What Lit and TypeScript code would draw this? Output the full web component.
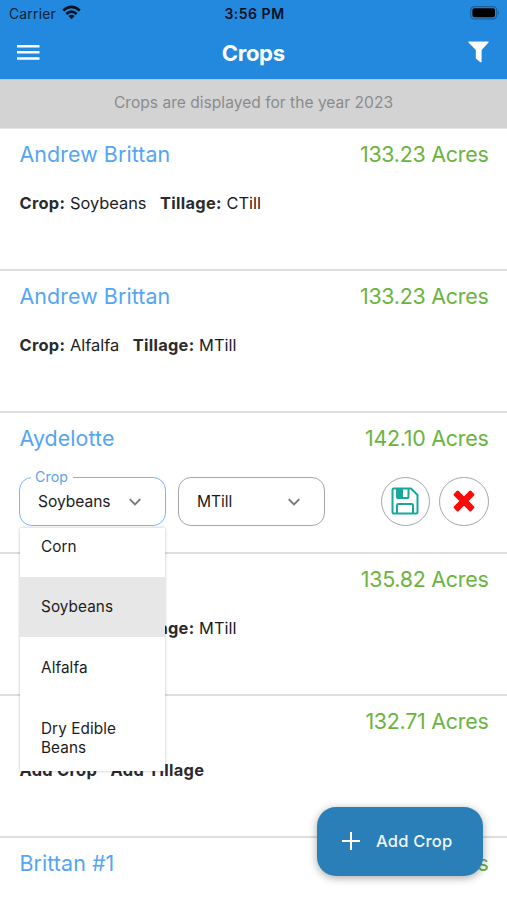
import { LitElement, html, css, nothing } from "lit";
import { customElement, property } from "lit/decorators.js";

interface Field {
  name: string;
  acres: string;
  crop?: string;
  tillage?: string;
  mode?: "editing" | "collapsed";
}

const FIELDS: Field[] = [
  { name: "Andrew Brittan", acres: "133.23", crop: "Soybeans", tillage: "CTill" },
  { name: "Andrew Brittan", acres: "133.23", crop: "Alfalfa", tillage: "MTill" },
  { name: "Aydelotte", acres: "142.10", crop: "Soybeans", tillage: "MTill", mode: "editing" },
  { name: "", acres: "135.82", crop: "Alfalfa", tillage: "MTill" },
  { name: "", acres: "132.71" },
  { name: "Brittan #1", acres: "132.71", mode: "collapsed" },
];

const CROPS = ["Corn", "Soybeans", "Alfalfa", "Dry Edible Beans"];

const chevron = html`<svg width="14" height="10" viewBox="0 0 14 10">
  <path d="M1.700 2.200 7 7.500 12.300 2.200" fill="none" stroke="#77777a" stroke-width="1.900" />
</svg>`;

@customElement("select-box")
class SelectBox extends LitElement {
  @property() label = "";
  @property() value = "";
  @property({ attribute: false }) options: string[] = [];

  static styles = css`
    :host { display: block; position: relative; width: 147px; height: 49.5px; }
    .box {
      box-sizing: border-box; height: 100%; border: 1.4px solid #a6a6a8; border-radius: 13px;
      display: flex; align-items: center; justify-content: space-between;
      padding: 1px 23px 0 18.5px; background: #fff;
      font-size: 15.6px; letter-spacing: -0.05px; color: #1c1c1e;
    }
    .box.open { border-color: #7ab6f0; }
    .label {
      position: absolute; left: 12px; top: -9px; padding: 0 5px 0 4.5px; background: #fff;
      color: #5aa5ee; font-size: 14.2px; line-height: 18px; letter-spacing: 0.1px;
    }
    .menu {
      position: absolute; z-index: 2; left: 1px; top: 51.5px; width: 145.5px; height: 243px;
      overflow: hidden; background: #fff; box-shadow: 0 0 3px rgba(0, 0, 0, 0.25);
      display: flex; flex-direction: column;
    }
    .item {
      box-sizing: border-box; flex: none; min-height: 60.5px; padding: 0 35px 0 21.5px;
      display: flex; align-items: center; white-space: normal;
      font-size: 15.3px; line-height: 19px; letter-spacing: 0.08px; color: #1c1c1e;
    }
    .item:first-child { margin-top: -12px; }
    .item:last-child { height: 81px; }
    .item.on { background: #e7e7e7; }
  `;

  render() {
    const open = this.options.length > 0;
    return html`
      <div class="box ${open ? "open" : ""}"><span>${this.value}</span>${chevron}</div>
      ${this.label ? html`<span class="label">${this.label}</span>` : nothing}
      ${open
        ? html`<div class="menu">
            ${this.options.map((o) => html`<div class="item ${o === this.value ? "on" : ""}">${o}</div>`)}
          </div>`
        : nothing}
    `;
  }
}

@customElement("field-row")
class FieldRow extends LitElement {
  @property({ attribute: false }) field!: Field;

  static styles = css`
    :host {
      display: block; box-sizing: border-box; height: 141.7px; flex: none;
      border-bottom: 2px solid #dedede; padding: 11.2px 18.5px 0 19.5px; white-space: nowrap;
    }
    .head {
      display: flex; justify-content: space-between; height: 28px; line-height: 28px;
      font-size: 21.4px;
    }
    .name { color: #54a5f5; letter-spacing: 0.08px; }
    .acres { color: #6ab43e; letter-spacing: -0.25px; }
    .details {
      display: flex; gap: 13.5px; margin-top: 24px; line-height: 22px;
      font-size: 16.4px; color: #1c1c1e;
    }
    .details b { font-weight: 650; color: #2b2b2d; letter-spacing: 0.3px; }
    .edit { display: flex; align-items: center; margin: 24.8px 0 0 -1px; }
    .edit select-box + select-box { margin-left: 12px; }
    .round {
      box-sizing: border-box; width: 49.5px; height: 49.5px; border: 1.4px solid #a6a6a8;
      border-radius: 50%; display: flex; align-items: center; justify-content: center;
    }
    .save { margin-left: auto; margin-right: 9px; }
  `;

  private get details() {
    const f = this.field;
    if (!f.crop) return html`<div class="details"><b>Add Crop</b><b>Add Tillage</b></div>`;
    return html`<div class="details">
      <span><b>Crop:</b> ${f.crop}</span><span><b>Tillage:</b> ${f.tillage}</span>
    </div>`;
  }

  private get editor() {
    const f = this.field;
    return html`<div class="edit">
      <select-box label="Crop" .value=${f.crop} .options=${CROPS}></select-box>
      <select-box .value=${f.tillage}></select-box>
      <div class="round save">
        <svg width="28" height="28" viewBox="0 0 28 28" fill="none" stroke="#18a79d" stroke-width="2" stroke-linejoin="round">
          <path d="M1.500 2.700Q1.500 1.500 2.700 1.500H20L26.500 8V25.300Q26.500 26.500 25.300 26.500H2.700Q1.500 26.500 1.500 25.300Z" />
          <path d="M6 26.500V18.300Q6 17 7.300 17H20.700Q22 17 22 18.300V26.500" />
          <path d="M6 1.500V10.200Q6 11 6.800 11H16.700Q17.500 11 17.500 10.200V1.500" />
          <path d="M6.500 1.500H12V11H6.500Z" fill="#18a79d" stroke="none" />
        </svg>
      </div>
      <div class="round">
        <svg width="22" height="22" viewBox="0 0 22 22" fill="#fb0a0a">
          <rect x="-1.200" y="7.700" width="24.400" height="6.600" rx="1.500" transform="rotate(45 11 11)" />
          <rect x="-1.200" y="7.700" width="24.400" height="6.600" rx="1.500" transform="rotate(-45 11 11)" />
        </svg>
      </div>
    </div>`;
  }

  private get body() {
    if (this.field.mode === "collapsed") return nothing;
    return this.field.mode === "editing" ? this.editor : this.details;
  }

  render() {
    const f = this.field;
    return html`
      <div class="head"><span class="name">${f.name}</span><span class="acres">${f.acres} Acres</span></div>
      ${this.body}
    `;
  }
}

@customElement("app-root")
class AppRoot extends LitElement {
  static styles = css`
    :host {
      display: flex; flex-direction: column; position: relative; width: 507px; height: 900px;
      overflow: hidden; background: #fff; font-family: Inter, "Liberation Sans", sans-serif;
      color: #1c1c1e;
    }
    .top { flex: none; height: 79px; background: #2389de; }
    .status {
      display: grid; grid-template-columns: 1fr auto 1fr; align-items: center; height: 27px;
      padding: 0 7px 0 9px; font-size: 13.8px; color: #0b2236; letter-spacing: 0.25px;
    }
    .carrier { display: flex; align-items: center; gap: 6px; }
    .carrier svg { margin-top: -2px; }
    .time { font-weight: 600; color: #06121f; font-size: 14px; letter-spacing: 0.5px; }
    .battery { justify-self: end; display: block; margin-top: -1px; }
    .bar {
      display: grid; grid-template-columns: 1fr auto 1fr; align-items: center; height: 52px;
      padding: 0 18px 0 16.5px; color: #fff;
    }
    .bar svg { display: block; margin-top: -1.5px; }
    .title { font-size: 22px; font-weight: 650; letter-spacing: -0.3px; padding-left: 1px; }
    .bar .filter { justify-self: end; margin-top: -2.5px; }
    .notice {
      flex: none; box-sizing: border-box; height: 50.2px; padding-bottom: 3px;
      background: #d3d3d3; border-top: 1px solid #a9cdeb;
      border-bottom: 1px solid #e4e4e4;
      display: flex; align-items: center; justify-content: center;
      font-size: 15.6px; color: #8b8b8d;
    }
    .fab {
      position: absolute; left: 317px; top: 807px; width: 165.5px; height: 68.5px;
      box-sizing: border-box; border-radius: 19px; background: #2a7fb9; color: #eef6fc;
      box-shadow: 0 2px 9px rgba(0, 0, 0, 0.35); z-index: 3;
      display: flex; align-items: center; gap: 16px; padding-left: 25px;
      font-size: 16.5px; font-weight: 500; letter-spacing: 0.2px; white-space: nowrap;
    }
  `;

  render() {
    return html`
      <div class="top">
        <div class="status">
          <div class="carrier">
            <span>Carrier</span>
            <svg width="19" height="15" viewBox="0 0 19 15" fill="none" stroke="#06121f" stroke-width="2.600">
              <path d="M1.200 5.500Q9.500-1.900 17.800 5.500" />
              <path d="M4.300 9Q9.500 4.400 14.700 9" />
              <path d="M9.500 14.200 6.400 11Q9.500 8.600 12.600 11Z" fill="#06121f" stroke="none" />
            </svg>
          </div>
          <span class="time">3:56 PM</span>
          <svg class="battery" width="30" height="14" viewBox="0 0 30 14">
            <rect x="0.700" y="0.700" width="26" height="12.200" rx="3.600" fill="none" stroke="#1b5f98" stroke-width="1.200" />
            <rect x="2.400" y="2.300" width="22.600" height="9" rx="2" fill="#000" />
            <path d="M28 4.800Q30 6.800 28 8.800Z" fill="#1b5f98" />
          </svg>
        </div>
        <div class="bar">
          <svg width="23" height="17" viewBox="0 0 23 17" fill="none" stroke="#fff" stroke-width="2.500">
            <path d="M0 2.200H22.500M0 8.300H22.500M0 14.400H22.500" />
          </svg>
          <span class="title">Crops</span>
          <svg class="filter" width="21" height="22" viewBox="0 0 21 22">
            <path d="M.8.500H20.200Q21 .700 20.500 1.600L13.600 9V20.700Q13.400 21.700 12.400 21.200L7.800 17.600V9L.5 1.600Q0 .700.800.500Z" fill="#fff" />
          </svg>
        </div>
      </div>
      <div class="notice">Crops are displayed for the year 2023</div>
      ${FIELDS.map((f) => html`<field-row .field=${f}></field-row>`)}
      <div class="fab">
        <svg width="18" height="18" viewBox="0 0 18 18" stroke="#fff" stroke-width="2">
          <path d="M9 0V18M0 9H18" />
        </svg>
        <span>Add Crop</span>
      </div>
    `;
  }
}
